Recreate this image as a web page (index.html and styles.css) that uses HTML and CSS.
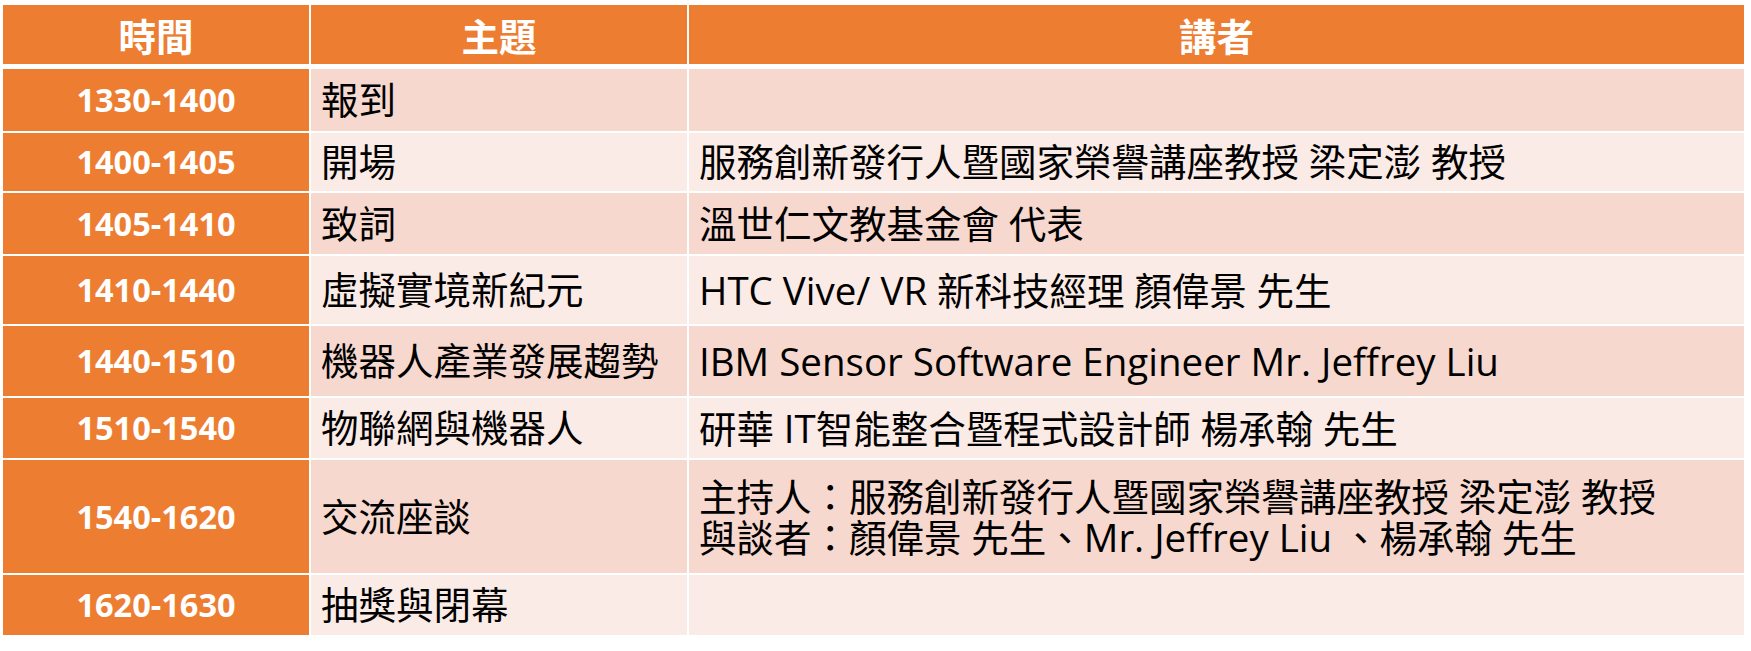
FILE: index.html
```html
<!DOCTYPE html>
<html lang="zh-Hant">
<head>
<meta charset="utf-8">
<title>議程</title>
<link rel="stylesheet" href="styles.css">
</head>
<body>
<div class="agenda">
  <div class="grid head">
    <div class="cell th">時間</div>
    <div class="cell th">主題</div>
    <div class="cell th">講者</div>
  </div>
  <div class="grid body">
    <div class="cell time">1330-1400</div>
    <div class="cell odd">報到</div>
    <div class="cell odd"></div>

    <div class="cell time">1400-1405</div>
    <div class="cell even">開場</div>
    <div class="cell even">服務創新發行人暨國家榮譽講座教授 梁定澎 教授</div>

    <div class="cell time">1405-1410</div>
    <div class="cell odd">致詞</div>
    <div class="cell odd">溫世仁文教基金會 代表</div>

    <div class="cell time">1410-1440</div>
    <div class="cell even">虛擬實境新紀元</div>
    <div class="cell even"><p class="txt"><span class="lat">HTC Vive/ VR</span> 新科技經理 顏偉景 先生</p></div>

    <div class="cell time">1440-1510</div>
    <div class="cell odd">機器人產業發展趨勢</div>
    <div class="cell odd"><p class="txt"><span class="lat">IBM Sensor Software Engineer Mr. Jeffrey Liu</span></p></div>

    <div class="cell time">1510-1540</div>
    <div class="cell even">物聯網與機器人</div>
    <div class="cell even"><p class="txt">研華 <span class="lat">IT</span>智能整合暨程式設計師 楊承翰 先生</p></div>

    <div class="cell time">1540-1620</div>
    <div class="cell odd">交流座談</div>
    <div class="cell odd multi"><p class="txt">主持人：服務創新發行人暨國家榮譽講座教授 梁定澎 教授</p><p class="txt">與談者：顏偉景 先生、<span class="lat">Mr. Jeffrey Liu</span> 、楊承翰 先生</p></div>

    <div class="cell time">1620-1630</div>
    <div class="cell even">抽獎與閉幕</div>
    <div class="cell even"></div>
  </div>
</div>
</body>
</html>
```

FILE: styles.css
```css
html, body {
  margin: 0;
  padding: 0;
  background: #ffffff;
}

.agenda {
  padding: 5px 0 0 3px;
  font-family: "Open Sans", "Noto Sans CJK TC", sans-serif;
  color: #000000;
}

.grid {
  display: grid;
  grid-template-columns: 306px 376px 1055px;
  column-gap: 2px;
  row-gap: 2px;
}

.head {
  grid-template-rows: 59px;
}

.body {
  margin-top: 5px;
  grid-template-rows: 62px 58px 61px 68px 70px 60px 113px 60px;
}

.cell {
  display: flex;
  align-items: center;
  padding: 0 10px;
  font-size: 37.5px;
  line-height: 40px;
  white-space: nowrap;
  overflow: hidden;
}

.txt {
  margin: 0;
  height: 40px;
  line-height: 40px;
}

.th {
  background: #ed7d31;
  color: #ffffff;
  font-weight: bold;
  justify-content: center;
  font-family: "Noto Sans CJK TC", sans-serif;
}

.time {
  background: #ed7d31;
  color: #ffffff;
  font-weight: bold;
  justify-content: center;
  font-size: 32.5px;
}

.odd {
  background: #f7d8ce;
}

.even {
  background: #fbebe6;
}

.multi {
  flex-direction: column;
  align-items: flex-start;
  justify-content: center;
}

.lat {
  font-size: 38.5px;
  line-height: 40px;
}
```
